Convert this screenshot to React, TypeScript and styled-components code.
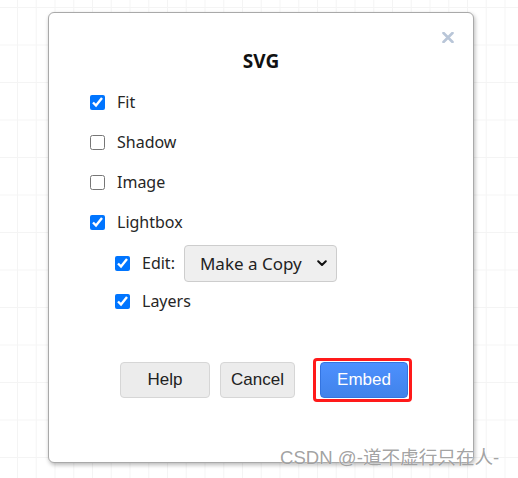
import React from "react";
import styled, { createGlobalStyle } from "styled-components";

const GlobalStyle = createGlobalStyle`
  html, body {
    margin: 0;
    padding: 0;
    height: 100%;
  }
  body {
    font-family: "Noto Sans", "Open Sans", sans-serif;
    overflow: hidden;
  }
`;

const Page = styled.div`
  position: relative;
  box-sizing: border-box;
  width: 100%;
  height: 100vh;
  padding: 12px 0 0 48px;
  background-color: #ffffff;
  background-image: linear-gradient(to right, #f4f4f4 1px, transparent 1px),
    linear-gradient(to bottom, #f4f4f4 1px, transparent 1px);
  background-size: 18.75px 37.5px;
  background-position: 17px 7px;
`;

const Dialog = styled.div`
  position: relative;
  box-sizing: border-box;
  width: 426px;
  height: 451px;
  background: #ffffff;
  border: 1px solid #a9a9a9;
  border-radius: 6px;
  box-shadow: 1px 2px 4px rgba(0, 0, 0, 0.28);
  padding-top: 36px;
  display: flex;
  flex-direction: column;
`;

const CloseButton = styled.button`
  position: absolute;
  top: 17px;
  right: 18px;
  width: 14px;
  height: 14px;
  padding: 0;
  border: none;
  background: none;
  display: flex;
  align-items: center;
  justify-content: center;
  cursor: pointer;
`;

const Title = styled.h2`
  margin: 0;
  text-align: center;
  font-size: 19px;
  line-height: 24px;
  font-weight: 700;
  color: #111;
`;

const Options = styled.div`
  margin-top: 9px;
  padding-left: 41px;
  display: flex;
  flex-direction: column;
`;

const Row = styled.label<{ $height: number; $indent?: boolean }>`
  display: flex;
  align-items: center;
  height: ${(p) => p.$height}px;
  padding-left: ${(p) => (p.$indent ? 25 : 0)}px;
  font-size: 16px;
  color: #262626;
`;

const Check = styled.input.attrs({ type: "checkbox" })`
  width: 15px;
  height: 15px;
  margin: 0 12px 0 0;
  accent-color: #0075ff;
`;

const SelectWrap = styled.span`
  position: relative;
  display: inline-flex;
  margin-left: 9px;
`;

const Select = styled.select`
  appearance: none;
  box-sizing: border-box;
  width: 153px;
  height: 37px;
  padding: 0 30px 0 15px;
  font-family: "Noto Sans", sans-serif;
  font-size: 17px;
  color: #222;
  background: #efefef;
  border: 1px solid #cdcdcd;
  border-radius: 4px;
`;

const Chevron = styled.svg`
  position: absolute;
  right: 10px;
  top: 15px;
  pointer-events: none;
`;

const ButtonBar = styled.div`
  margin-top: 44px;
  padding-left: 71px;
  display: flex;
  align-items: center;
`;

const Button = styled.button<{ $primary?: boolean; $width: number; $gap?: number }>`
  position: relative;
  box-sizing: border-box;
  width: ${(p) => p.$width}px;
  height: 36px;
  margin-right: ${(p) => p.$gap ?? 0}px;
  font-family: "Liberation Sans", Arial, sans-serif;
  font-size: 17px;
  border-radius: 4px;
  cursor: pointer;
  color: ${(p) => (p.$primary ? "#ffffff" : "#222222")};
  background: ${(p) =>
    p.$primary ? "linear-gradient(to bottom, #4d90fe, #4183ea)" : "#ececec"};
  border: 1px solid ${(p) => (p.$primary ? "#3474e0" : "#d6d6d6")};
`;

const Highlight = styled.span`
  position: absolute;
  left: -8px;
  right: -5px;
  top: -5px;
  bottom: -5px;
  border: 3px solid #ff1a1a;
  border-radius: 4px;
  pointer-events: none;
`;

const Watermark = styled.div`
  position: absolute;
  left: 280px;
  top: 447px;
  font-family: "Liberation Sans", "Noto Sans CJK SC", sans-serif;
  font-size: 18.6px;
  line-height: 22px;
  color: rgba(110, 110, 110, 0.65);
  text-shadow: 0 0 1px #ffffff;
  white-space: nowrap;
`;

const options = [
  { label: "Fit", checked: true, height: 40 },
  { label: "Shadow", checked: false, height: 40 },
  { label: "Image", checked: false, height: 40 },
  { label: "Lightbox", checked: true, height: 40 },
];

export default function App() {
  return (
    <Page>
      <GlobalStyle />
      <Dialog>
        <CloseButton aria-label="Close">
          <svg width="12" height="11" viewBox="0 0 12 11">
            <path d="M1.5 1 L10.5 10 M10.5 1 L1.5 10" stroke="#b9c6d8" strokeWidth="2.6" strokeLinecap="round" />
          </svg>
        </CloseButton>
        <Title>SVG</Title>

        <Options>
          {options.map((o) => (
            <Row key={o.label} $height={o.height}>
              <Check defaultChecked={o.checked} />
              {o.label}
            </Row>
          ))}
          <Row $height={42} $indent>
            <Check defaultChecked />
            Edit:
            <SelectWrap>
              <Select defaultValue="copy">
                <option value="copy">Make a Copy</option>
                <option value="edit">Edit</option>
              </Select>
              <Chevron width="10" height="7" viewBox="0 0 10 7">
                <path d="M1.2 1.2 L5 5 L8.8 1.2" fill="none" stroke="#111" strokeWidth="2" strokeLinecap="round" strokeLinejoin="round" />
              </Chevron>
            </SelectWrap>
          </Row>
          <Row $height={34} $indent>
            <Check defaultChecked />
            Layers
          </Row>
        </Options>

        <ButtonBar>
          <Button $width={90} $gap={10}>Help</Button>
          <Button $width={75} $gap={25}>Cancel</Button>
          <Button $width={88} $primary>
            Embed
            <Highlight />
          </Button>
        </ButtonBar>
      </Dialog>
      <Watermark>CSDN @-道不虚行只在人-</Watermark>
    </Page>
  );
}
